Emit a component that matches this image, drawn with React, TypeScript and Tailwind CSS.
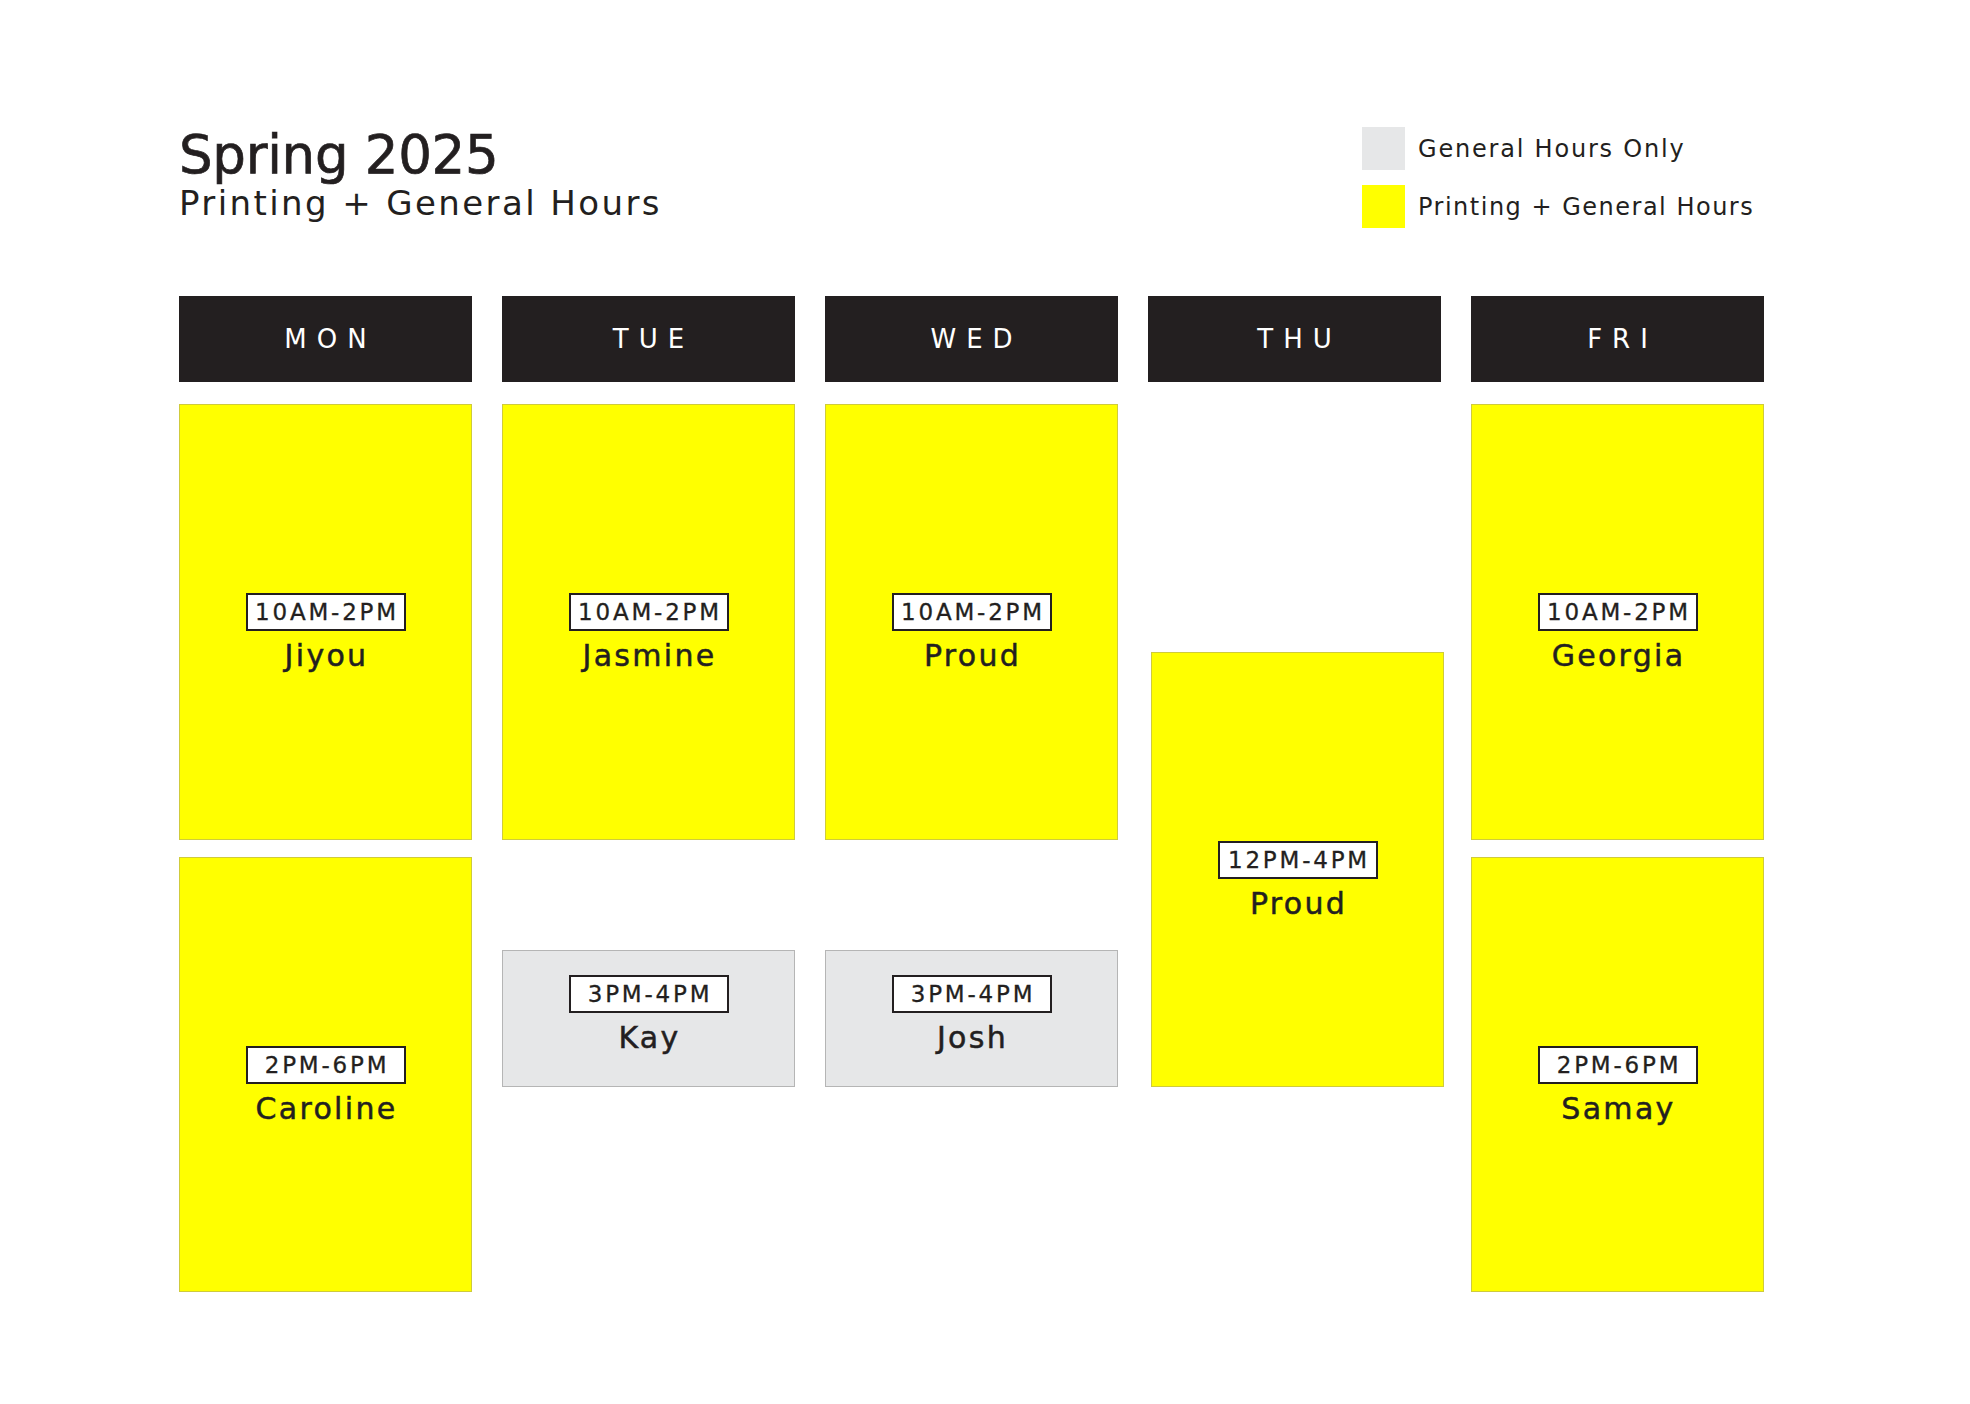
type Kind = 'print' | 'general';

interface Slot {
  time: string;
  name: string;
  kind: Kind;
  className: string;
}

interface Day {
  day: string;
  slots: Slot[];
}

const days: Day[] = [
  {
    day: 'MON',
    slots: [
      { time: '10AM-2PM', name: 'Jiyou', kind: 'print', className: 'h-[436px]' },
      { time: '2PM-6PM', name: 'Caroline', kind: 'print', className: 'mt-[17px] h-[435px]' },
    ],
  },
  {
    day: 'TUE',
    slots: [
      { time: '10AM-2PM', name: 'Jasmine', kind: 'print', className: 'h-[436px]' },
      { time: '3PM-4PM', name: 'Kay', kind: 'general', className: 'mt-[110px] h-[137px]' },
    ],
  },
  {
    day: 'WED',
    slots: [
      { time: '10AM-2PM', name: 'Proud', kind: 'print', className: 'h-[436px]' },
      { time: '3PM-4PM', name: 'Josh', kind: 'general', className: 'mt-[110px] h-[137px]' },
    ],
  },
  {
    day: 'THU',
    slots: [
      { time: '12PM-4PM', name: 'Proud', kind: 'print', className: 'mt-[248px] h-[435px] ml-[3px] -mr-[3px]' },
    ],
  },
  {
    day: 'FRI',
    slots: [
      { time: '10AM-2PM', name: 'Georgia', kind: 'print', className: 'h-[436px]' },
      { time: '2PM-6PM', name: 'Samay', kind: 'print', className: 'mt-[17px] h-[435px]' },
    ],
  },
];

function ShiftCard({ slot }: { slot: Slot }) {
  const isPrint = slot.kind === 'print';
  return (
    <div
      className={`flex flex-col items-center border ${
        isPrint ? 'bg-[#ffff00] border-[#cfcb3c] pt-[188px]' : 'bg-[#e6e7e8] border-[#b5b5b5] pt-[24px]'
      } ${slot.className}`}
    >
      <div className="flex h-[38px] w-[160px] items-center justify-center border-2 border-[#231f20] bg-white pl-[3px] text-[23px] leading-none tracking-[2.8px] [-webkit-text-stroke:0.3px_#231f20]">
        {slot.time}
      </div>
      <div className="mt-[10px] pl-[2px] text-[30px] leading-none tracking-[2.3px] [-webkit-text-stroke:0.5px_#231f20]">
        {slot.name}
      </div>
    </div>
  );
}

export default function App() {
  return (
    <div className="h-[1404px] w-[1970px] bg-white font-['DejaVu_Sans',sans-serif] text-[#231f20]">
      <div className="pl-[179px] pt-[127px]">
        {/* Title | legend */}
        <header className="flex">
          <div className="w-[1183px] pt-[1px]">
            <h1 className="text-[53px] font-normal leading-none tracking-[-0.3px] [-webkit-text-stroke:0.7px_#231f20]">
              Spring 2025
            </h1>
            <p className="mt-[5px] text-[34px] leading-none tracking-[2.4px]">Printing + General Hours</p>
          </div>
          <div className="flex flex-col gap-[15px]">
            <div className="flex items-center gap-[13px]">
              <span className="h-[43px] w-[43px] bg-[#e6e7e8]" />
              <span className="text-[24px] leading-none tracking-[1.8px]">General Hours Only</span>
            </div>
            <div className="flex items-center gap-[13px]">
              <span className="h-[43px] w-[43px] bg-[#ffff00]" />
              <span className="text-[24px] leading-none tracking-[1.5px]">Printing + General Hours</span>
            </div>
          </div>
        </header>

        {/* Week grid */}
        <div className="mt-[68px] grid w-[1585px] grid-cols-5 gap-x-[30px]">
          {days.map((d) => (
            <div key={d.day} className="flex flex-col">
              <div className="flex h-[86px] items-center justify-center bg-[#231f20] pl-[10px] text-[26px] leading-none tracking-[10px] text-white">
                {d.day}
              </div>
              <div className="mt-[22px] flex flex-col">
                {d.slots.map((s) => (
                  <ShiftCard key={s.time + s.name} slot={s} />
                ))}
              </div>
            </div>
          ))}
        </div>
      </div>
    </div>
  );
}
